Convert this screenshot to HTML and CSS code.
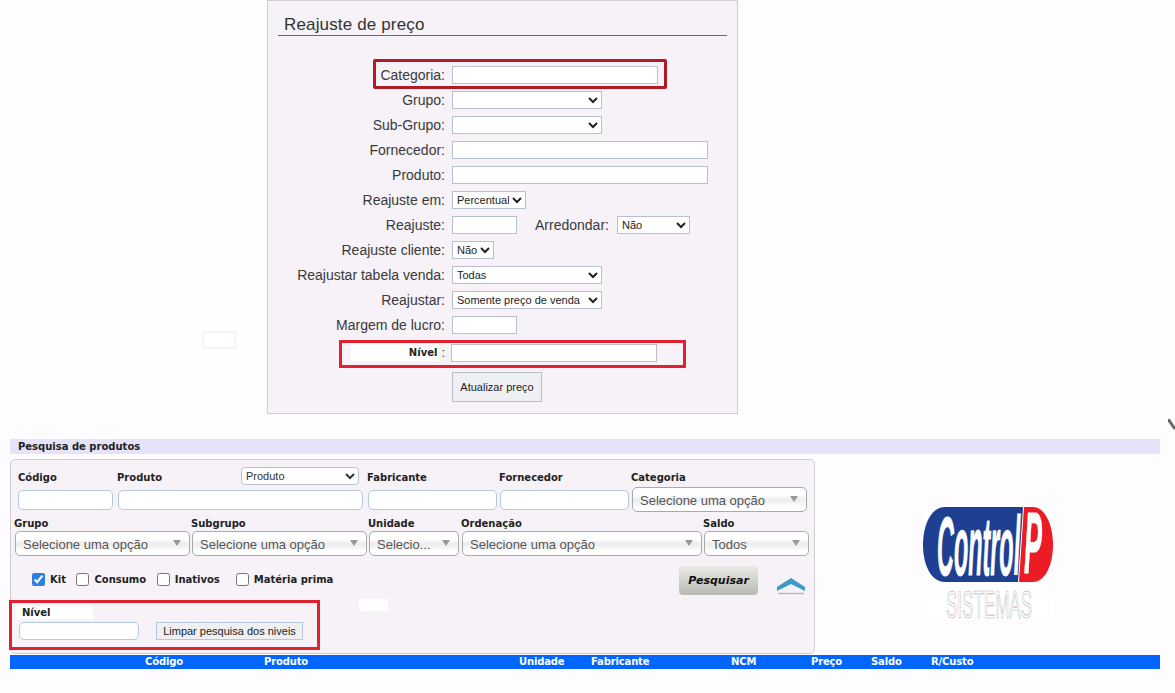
FILE: index.html
```html
<!DOCTYPE html>
<html lang="pt-BR">
<head>
<meta charset="utf-8">
<title>Reajuste de preço</title>
<link rel="stylesheet" href="styles.css">
</head>
<body>
<section class="price-panel">
  <h1 class="price-title">Reajuste de preço</h1>
  <form class="price-form">
    <div class="row"><label class="lbl">Categoria:</label><input class="in w-206" type="text"></div>
    <div class="row"><label class="lbl">Grupo:</label><select class="sel w-150"><option></option></select></div>
    <div class="row"><label class="lbl">Sub-Grupo:</label><select class="sel w-150"><option></option></select></div>
    <div class="row"><label class="lbl">Fornecedor:</label><input class="in w-256" type="text"></div>
    <div class="row"><label class="lbl">Produto:</label><input class="in w-256" type="text"></div>
    <div class="row"><label class="lbl">Reajuste em:</label><select class="sel w-74"><option>Percentual</option></select></div>
    <div class="row"><label class="lbl">Reajuste:</label><input class="in w-65" type="text"><label class="lbl-inline">Arredondar:</label><select class="sel w-73"><option>Não</option></select></div>
    <div class="row"><label class="lbl">Reajuste cliente:</label><select class="sel w-42"><option>Não</option></select></div>
    <div class="row"><label class="lbl">Reajustar tabela venda:</label><select class="sel w-150"><option>Todas</option></select></div>
    <div class="row"><label class="lbl">Reajustar:</label><select class="sel w-150"><option>Somente preço de venda</option></select></div>
    <div class="row"><label class="lbl">Margem de lucro:</label><input class="in w-65" type="text"></div>
    <div class="row row-nivel"><label class="lbl"><span class="nivel-mask"><b class="nivel-b">Nível</b></span><span class="nivel-colon">:</span></label><input class="in w-206 nivel-in" type="text"></div>
    <div class="row row-btn"><span class="lbl"></span><button class="btn-update" type="button">Atualizar preço</button></div>
  </form>
  <span class="mark mark-dark"></span>
  <span class="mark mark-bright"></span>
</section>
<span class="ghost-box"></span>
<svg class="cursor-frag" width="7" height="12" viewBox="0 0 7 12"><path d="M0 0 L7 10" stroke="#666" stroke-width="3" fill="none"/></svg>

<h2 class="search-head">Pesquisa de produtos</h2>
<div class="search-wrap">
  <section class="search-panel">
    <div class="s-row s-row-1">
      <div class="f f-codigo"><div class="f-lab">Código</div><input class="rin" type="text"></div>
      <div class="f f-produto"><div class="f-lab f-lab-sel">Produto<select class="sel sel-prod"><option>Produto</option></select></div><input class="rin" type="text"></div>
      <div class="f f-fabr"><div class="f-lab">Fabricante</div><input class="rin" type="text"></div>
      <div class="f f-forn"><div class="f-lab">Fornecedor</div><input class="rin" type="text"></div>
      <div class="f f-cat"><div class="f-lab f-lab-cat">Categoria</div><div class="combo"><span>Selecione uma opção</span><i class="tri"></i></div></div>
    </div>
    <div class="s-row s-row-2">
      <div class="f f-175"><div class="g-lab">Grupo</div><div class="combo"><span>Selecione uma opção</span><i class="tri"></i></div></div>
      <div class="f f-175"><div class="g-lab">Subgrupo</div><div class="combo"><span>Selecione uma opção</span><i class="tri"></i></div></div>
      <div class="f f-90"><div class="g-lab">Unidade</div><div class="combo"><span>Selecio...</span><i class="tri"></i></div></div>
      <div class="f f-240"><div class="g-lab">Ordenação</div><div class="combo"><span>Selecione uma opção</span><i class="tri"></i></div></div>
      <div class="f f-105"><div class="g-lab">Saldo</div><div class="combo"><span>Todos</span><i class="tri"></i></div></div>
    </div>
    <div class="s-row s-row-3">
      <div class="checks">
        <label class="chk"><input type="checkbox" checked>Kit</label>
        <label class="chk"><input type="checkbox">Consumo</label>
        <label class="chk"><input type="checkbox">Inativos</label>
        <label class="chk chk-last"><input type="checkbox">Matéria prima</label>
      </div>
      <button class="btn-search" type="button">Pesquisar</button>
      <svg class="chev" width="30" height="19" viewBox="0 0 30 19"><path d="M1 11 L15 2 L29 11 L29 15 L15 8 L1 15 Z" fill="#3f9ac8"/><path d="M2 17.5 H28" stroke="#b5b5b5" stroke-width="1.4"/></svg>
    </div>
    <div class="s-row-4">
      <div class="n-lab"><span class="n-mask">Nível</span></div>
      <div class="n-ctl"><input class="rin n-in" type="text"><button class="btn-clear" type="button">Limpar pesquisa dos niveis</button></div>
    </div>
    <span class="mark mark-search"></span>
    <span class="white-patch"></span>
  </section>
  <div class="logo-cell">
    <svg class="logo" width="130" height="113" viewBox="0 0 130 113">
      <rect width="130" height="113" fill="#fff"/>
      <path d="M100 0 H22 C8 0 0 18 0 38 C0 58 8 75 22 75 H95 Z" fill="#1f3f92"/>
      <path d="M101 0 H110 C122 0 130 18 130 38 C130 58 122 75 110 75 H96 Z" fill="#ec1c24"/>
      <text class="logo-t" transform="translate(14 68) scale(0.78 2.78)">Control</text>
      <text class="logo-t" transform="translate(101 66) scale(0.9 2.9)">P</text>
      <text class="logo-s" textLength="86" lengthAdjust="spacingAndGlyphs" transform="translate(23 111) scale(1 1.75)">SISTEMAS</text>
    </svg>
  </div>
</div>
<div class="grid-head">
  <span class="c c1">Código</span><span class="c c2">Produto</span><span class="c c3">Unidade</span><span class="c c4">Fabricante</span><span class="c c5">NCM</span><span class="c c6">Preço</span><span class="c c7">Saldo</span><span class="c c8">R/Custo</span>
</div>
</body>
</html>
```

FILE: styles.css
```css
* { box-sizing: border-box; }
html, body { margin: 0; padding: 0; }
body {
  position: relative;
  height: 693px;
  overflow: hidden;
  background: #fefcff;
  font-family: "Liberation Sans", Arial, sans-serif;
  color: #333;
}

/* top panel */
.price-panel {
  position: relative;
  width: 471px;
  height: 414px;
  margin-left: 267px;
  padding: 0 10px;
  background: #f6f2f7;
  border: 1px solid #cfcfd3;
}
.price-title {
  margin: 0 0 26px;
  height: 35px;
  padding: 14px 0 0 6px;
  font-size: 17px;
  line-height: 20px;
  font-weight: normal;
  color: #333;
  letter-spacing: 0.15px;
  border-bottom: 1px solid #6a6a6a;
}
.price-form { display: flex; flex-direction: column; }
.row { display: flex; align-items: center; height: 25px; }
.lbl {
  width: 167px;
  margin-right: 7px;
  text-align: right;
  font-size: 14px;
  color: #3a3a3a;
  flex: none;
}
.lbl-inline { margin: 0 8px 0 18px; font-size: 14px; color: #3a3a3a; }
.in {
  height: 18px;
  padding: 0 3px;
  background: #fff;
  border: 1px solid #b7c0cc;
  border-radius: 0;
  outline: none;
}
.sel {
  height: 18px;
  padding: 0;
  background: #fff;
  border: 1px solid #b7c0cc;
  border-radius: 0;
  font-family: "Liberation Sans", Arial, sans-serif;
  font-size: 11px;
  color: #222;
}
.w-206 { width: 206px; }
.w-150 { width: 150px; }
.w-256 { width: 256px; }
.w-74 { width: 74px; }
.w-65 { width: 65px; }
.w-73 { width: 73px; }
.w-42 { width: 42px; }
.row-nivel { height: 29px; margin-top: 1px; }
.row-nivel .lbl { display: flex; justify-content: flex-end; align-items: center; margin-right: 6px; }
.nivel-mask {
  display: block;
  width: 88px;
  height: 17px;
  margin-right: 2px;
  padding-right: 2px;
  text-align: right;
  background: #fff;
  font: bold 10px/17px "DejaVu Sans", sans-serif;
  color: #222;
}
.nivel-b { font-weight: bold; }
.nivel-colon { line-height: 14px; font-size: 13px; }
.row-btn { height: 30px; margin-top: 5px; }
.btn-update {
  width: 90px;
  height: 30px;
  padding: 0;
  background: #eef0f3;
  border: 1px solid #b7c0cc;
  font: 11px "Liberation Sans", Arial, sans-serif;
  color: #222;
}
.mark { position: absolute; display: block; pointer-events: none; }
.mark-dark { left: 105px; top: 58px; width: 294px; height: 30px; border: 3px solid #b01a22; border-radius: 2px; }
.mark-bright { left: 71px; top: 339px; width: 347px; height: 28px; border: 3px solid #de2230; }
.ghost-box { position: absolute; left: 202px; top: 331px; width: 34px; height: 18px; border: 2px solid #f6f4f7; background: #fff; }
.cursor-frag { position: absolute; left: 1168px; top: 419px; }

/* search */
.search-head {
  width: 1150px;
  height: 15px;
  margin: 25px 0 5px 10px;
  padding-left: 8px;
  background: #e4e3f9;
  font: bold 10px/15px "DejaVu Sans", sans-serif;
  color: #222;
}
.search-wrap { display: flex; margin-left: 10px; height: 195px; }
.search-panel {
  position: relative;
  width: 805px;
  height: 195px;
  background: #f6f2f7;
  border: 1px solid #cfcfd3;
  border-radius: 5px;
  flex: none;
}
.s-row { display: flex; }
.s-row-1 { height: 57px; padding: 7px 0 0 7px; }
.s-row-2 { height: 46px; padding-left: 4px; gap: 2px; }
.f { display: flex; flex-direction: column; flex: none; }
.f-codigo { width: 95px; margin-right: 5px; }
.f-produto { width: 245px; margin-right: 5px; }
.f-fabr { width: 129px; margin-right: 3px; }
.f-forn { width: 129px; margin-right: 3px; }
.f-cat { width: 175px; }
.f-175 { width: 175px; }
.f-90 { width: 90px; }
.f-240 { width: 240px; margin-left: 1px; }
.f-105 { width: 105px; }
.f-lab, .g-lab, .n-lab, .chk, .grid-head {
  font-family: "DejaVu Sans", sans-serif;
  font-weight: bold;
  font-size: 10px;
  color: #222;
}
.f-lab { height: 23px; line-height: 22px; }
.f-produto .f-lab, .f-fabr .f-lab, .f-forn .f-lab, .f-cat .f-lab { margin-left: -1px; }
.f-lab-sel { display: flex; justify-content: space-between; padding-right: 4px; }
.sel-prod { width: 118px; height: 18px; border-radius: 4px; font-weight: normal; color: #333; }
.f-lab-cat { height: 20px; }
.g-lab { height: 14px; line-height: 14px; margin-left: -1px; }
.rin {
  height: 20px;
  width: 100%;
  background: #fff;
  border: 1px solid #b4c8dc;
  border-radius: 5px;
  outline: none;
}
.combo {
  display: flex;
  align-items: center;
  justify-content: space-between;
  height: 25px;
  padding: 2px 8px 0 7px;
  background: linear-gradient(#fff 0%, #fff 30%, #ececec 52%, #fff 85%);
  border: 1px solid #aaa;
  border-radius: 5px;
  font-size: 13px;
  color: #555;
  white-space: nowrap;
  overflow: hidden;
}
.tri { width: 0; height: 0; margin-top: -3px; border-left: 4px solid transparent; border-right: 4px solid transparent; border-top: 6px solid #999; flex: none; }
.s-row-3 { height: 33px; align-items: center; padding: 0 8px 0 21px; }
.checks { display: flex; gap: 10.5px; }
.chk { display: flex; align-items: center; gap: 5px; line-height: 14px; }
.chk-last { margin-left: 5.5px; }
.chk input { width: 13px; height: 13px; margin: 0; accent-color: #2d7fe3; }
.btn-search {
  width: 79px;
  height: 29px;
  align-self: flex-start;
  margin: 3px 0 0 auto;
  padding: 0;
  background: linear-gradient(#eaeae6, #b9b9b3);
  border: 0;
  border-radius: 4px;
  font: italic bold 11px "DejaVu Sans", sans-serif;
  color: #111;
}
.chev { align-self: flex-start; margin: 13px 0 0 18px; }
.s-row-4 { padding-left: 8px; }
.n-lab { height: 13px; line-height: 13px; margin: 10px 0 0 -3px; }
.n-mask { display: block; width: 77px; height: 13px; padding-left: 6px; background: #fff; }
.n-ctl { display: flex; align-items: center; margin-top: 3px; }
.n-in { width: 120px; height: 18px; border-radius: 5px; }
.btn-clear {
  width: 147px;
  height: 18px;
  margin-left: 17px;
  padding: 0;
  background: #eef0f3;
  border: 1px solid #b4c8dc;
  font: 11px "Liberation Sans", Arial, sans-serif;
  color: #222;
}
.mark-search { left: -2px; top: 140px; width: 311px; height: 50px; border: 3px solid #de2230; }
.white-patch { position: absolute; left: 348px; top: 139px; width: 29px; height: 12px; background: #fff; }

.logo-cell { padding: 48px 0 0 108px; }
.logo { display: block; }
.logo-t { font: italic bold 30px "Liberation Sans", sans-serif; fill: #fff; stroke: #fff; stroke-width: 0.3; }
.logo-s { font: 22px "Liberation Sans", sans-serif; fill: #fff; stroke: #aaa; stroke-width: 0.4; }

.grid-head {
  display: flex;
  width: 1150px;
  height: 14px;
  margin: 1px 0 0 10px;
  padding-left: 135px;
  background: #0066ff;
  color: #fff;
  line-height: 14px;
  letter-spacing: -0.15px;
}
.c { flex: none; }
.c1 { width: 119px; }
.c2 { width: 255px; }
.c3 { width: 72px; }
.c4 { width: 140px; }
.c5 { width: 80px; }
.c6 { width: 60px; }
.c7 { width: 60px; }
.c8 { width: 60px; }
```
